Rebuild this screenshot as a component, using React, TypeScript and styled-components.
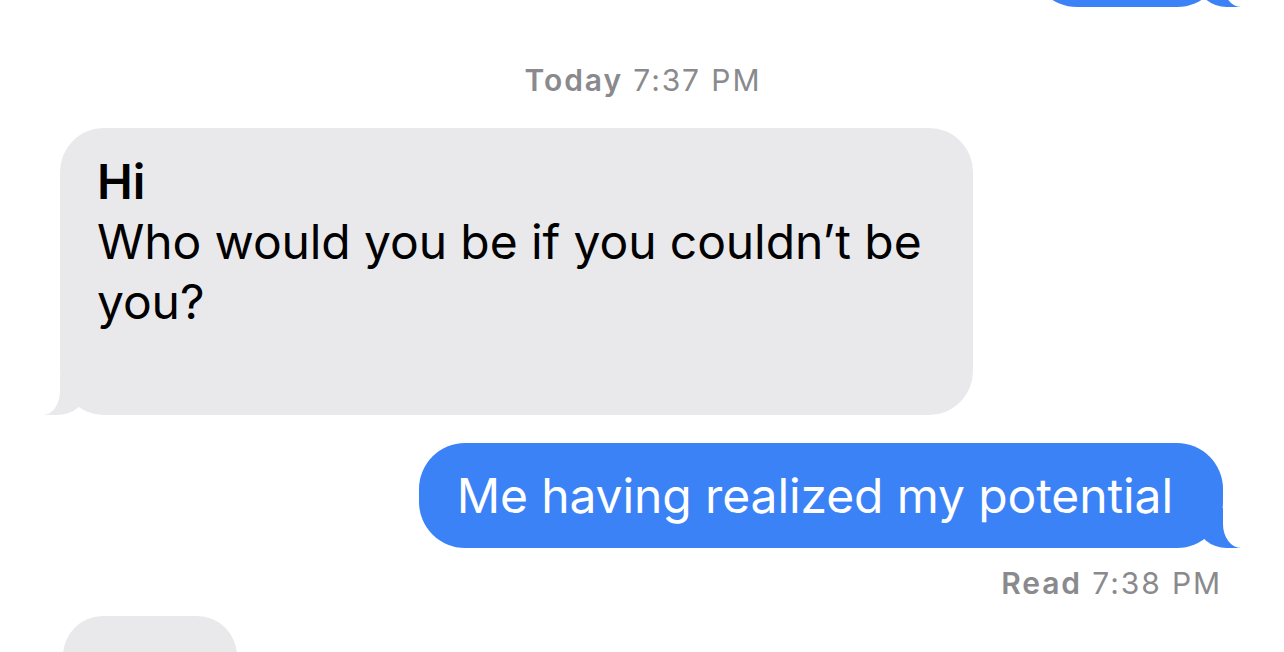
import React from "react";
import styled, { createGlobalStyle, css } from "styled-components";

const Global = createGlobalStyle`
  html, body { margin: 0; padding: 0; background: #ffffff; }
  body {
    font-family: Inter, "Noto Sans", "Liberation Sans", sans-serif;
    -webkit-font-smoothing: antialiased;
  }
`;

const Thread = styled.div`
  width: 1284px;
  height: 652px;
  overflow: hidden;
  display: flex;
  flex-direction: column;
`;

const Row = styled.div<{ $me?: boolean; $gap: number }>`
  display: flex;
  justify-content: ${(p) => (p.$me ? "flex-end" : "flex-start")};
  padding: 0 61px 0 60px;
  margin-top: ${(p) => p.$gap}px;
`;

const BLUE = "#3B82F7";
const GRAY = "#E9E9EB";

const Bubble = styled.div<{ $me?: boolean }>`
  position: relative;
  box-sizing: border-box;
  background: ${(p) => (p.$me ? BLUE : GRAY)};
  color: ${(p) => (p.$me ? "#ffffff" : "#000000")};
  border-radius: 46px;
  font-size: 48px;
  line-height: 60px;
  letter-spacing: -0.1px;
  padding: 23px 50px 22px 38px;
  white-space: nowrap;

  &::before,
  &::after {
    content: "";
    position: absolute;
    bottom: 0;
  }
  &::before {
    width: 44px;
    height: 40px;
    background: ${(p) => (p.$me ? BLUE : GRAY)};
  }
  &::after {
    width: 30px;
    height: 44px;
    background: #ffffff;
  }

  ${(p) =>
    p.$me
      ? css`
          &::before {
            right: -18px;
            border-bottom-left-radius: 30px 26px;
          }
          &::after {
            left: 100%;
            border-bottom-left-radius: 18px 24px;
          }
        `
      : css`
          &::before {
            left: -17px;
            border-bottom-right-radius: 30px 26px;
          }
          &::after {
            right: 100%;
            border-bottom-right-radius: 17px 24px;
          }
        `}
`;

const TopBubble = styled(Bubble)`
  width: 192px;
  height: 105px;
`;

const LongBubble = styled(Bubble)`
  width: 913px;
  padding: 24px 37px 83px 37px;
  border-radius: 44px;
`;

const PeekBubble = styled(Bubble)`
  width: 174px;
  height: 105px;
  border-radius: 40px;
  margin-left: 3px;
`;

const Strong = styled.span`
  font-weight: 600;
`;

const Meta = styled.div<{ $align: "center" | "right"; $gap: number }>`
  font-size: 30px;
  line-height: 36px;
  color: #8a8a8e;
  letter-spacing: 1.9px;
  text-align: ${(p) => p.$align};
  margin-top: ${(p) => p.$gap}px;
  padding-right: ${(p) => (p.$align === "right" ? "62px" : "0")};
  padding-left: ${(p) => (p.$align === "center" ? "2px" : "0")};
`;

const MetaStrong = styled.span`
  font-weight: 600;
`;

export default function App() {
  return (
    <>
      <Global />
      <Thread>
        <Row $me $gap={-98}>
          <TopBubble $me aria-hidden />
        </Row>

        <Meta $align="center" $gap={55}>
          <MetaStrong>Today</MetaStrong> 7:37 PM
        </Meta>

        <Row $gap={30}>
          <LongBubble>
            <Strong>Hi</Strong>
            <br />
            Who would you be if you couldn’t be
            <br />
            you?
          </LongBubble>
        </Row>

        <Row $me $gap={28}>
          <Bubble $me>Me having realized my potential</Bubble>
        </Row>

        <Meta $align="right" $gap={17}>
          <MetaStrong>Read</MetaStrong> 7:38 PM
        </Meta>

        <Row $gap={15}>
          <PeekBubble aria-hidden />
        </Row>
      </Thread>
    </>
  );
}
